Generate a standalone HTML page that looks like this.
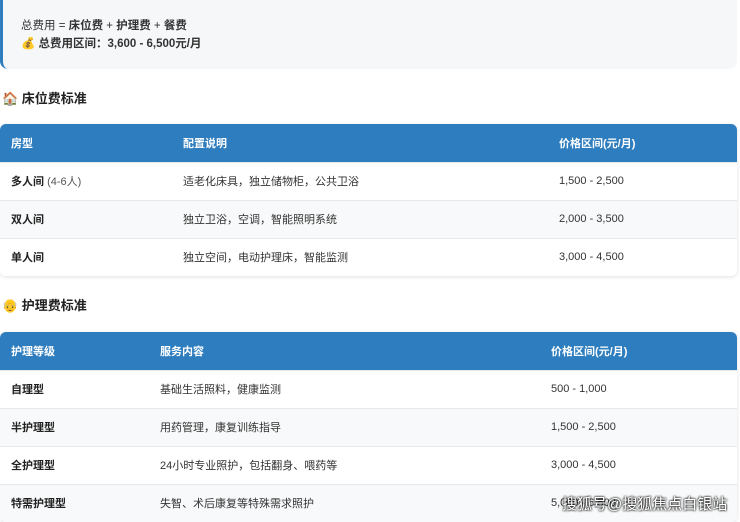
<!DOCTYPE html>
<html><head><meta charset="utf-8"><style>
*{margin:0;padding:0;box-sizing:border-box}
body{width:740px;height:519px;overflow:hidden;background:#fff;font-family:"Liberation Sans","Noto Sans CJK SC",sans-serif;font-size:11px;color:#333;position:relative}
.sum{position:absolute;left:0;top:0;width:737px;height:69px;background:#f6f7f9;border-left:3px solid #2e7dbf;border-radius:0 0 8px 8px}
.sum div{position:absolute;left:18px;font-size:11.5px}
.h{position:absolute;left:2px;font-size:13px;font-weight:bold;color:#222}
table{position:absolute;left:0;width:737px;border-collapse:collapse;border-radius:6px;overflow:hidden;box-shadow:0 1px 4px rgba(0,0,0,.12)}
th{background:#2e7dbf;color:#fff;text-align:left;font-weight:bold;height:38px;padding-left:11px}
td{height:38px;padding-left:11px;border-top:1px solid #e6e8eb;color:#333;background:#fff}
tr:nth-child(odd) td{background:#f8f9fa}
td.b{font-weight:bold;color:#222}
.s{font-weight:normal;color:#555}
.wm{position:absolute;left:562px;top:493px;color:#fff;font-size:15px;text-shadow:0 0 2px #000,0 0 2px #000}
</style></head><body>
<div class="sum">
<div style="top:17px">总费用 = <b>床位费</b> + <b>护理费</b> + <b>餐费</b></div>
<div style="top:35px"><b>💰 总费用区间：3,600 - 6,500元/月</b></div>
</div>
<div class="h" style="top:88px">🏠 床位费标准</div>
<table style="top:124px">
<tr><th style="width:172px">房型</th><th style="width:376px">配置说明</th><th>价格区间(元/月)</th></tr>
<tr><td class="b">多人间 <span class="s">(4-6人)</span></td><td>适老化床具，独立储物柜，公共卫浴</td><td>1,500 - 2,500</td></tr>
<tr><td class="b">双人间</td><td>独立卫浴，空调，智能照明系统</td><td>2,000 - 3,500</td></tr>
<tr><td class="b">单人间</td><td>独立空间，电动护理床，智能监测</td><td>3,000 - 4,500</td></tr>
</table>
<div class="h" style="top:295px">👴 护理费标准</div>
<table style="top:332px">
<tr><th style="width:149px">护理等级</th><th style="width:391px">服务内容</th><th>价格区间(元/月)</th></tr>
<tr><td class="b">自理型</td><td>基础生活照料，健康监测</td><td>500 - 1,000</td></tr>
<tr><td class="b">半护理型</td><td>用药管理，康复训练指导</td><td>1,500 - 2,500</td></tr>
<tr><td class="b">全护理型</td><td>24小时专业照护，包括翻身、喂药等</td><td>3,000 - 4,500</td></tr>
<tr><td class="b">特需护理型</td><td>失智、术后康复等特殊需求照护</td><td>5,000 - 6,500</td></tr>
</table>
<div class="wm">搜狐号@搜狐焦点白银站</div>
</body></html>
